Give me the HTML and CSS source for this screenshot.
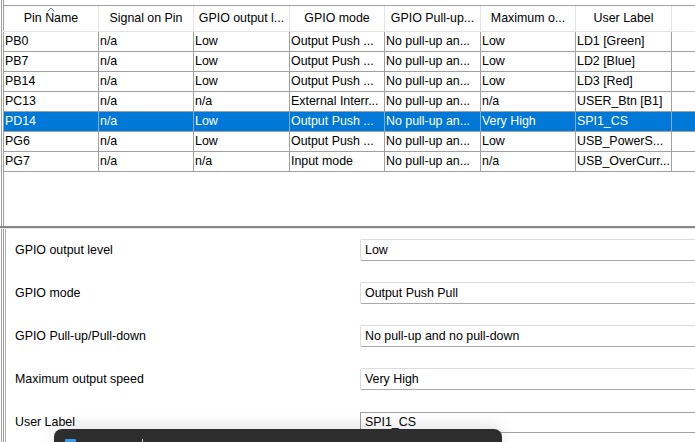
FILE: index.html
```html
<!DOCTYPE html>
<html>
<head>
<meta charset="utf-8">
<link rel="stylesheet" href="styles.css">
</head>
<body>
<div class="app">
  <div class="top">
    <div class="table">
      <div class="row head">
        <div class="c c1">Pin Name<svg class="caret" width="8" height="5" viewBox="0 0 8 5"><polyline points="0.5,4.5 4,1 7.5,4.5" fill="none" stroke="#707070" stroke-width="1"/></svg></div>
        <div class="c c2">Signal on Pin</div>
        <div class="c c3">GPIO output l...</div>
        <div class="c c4">GPIO mode</div>
        <div class="c c5">GPIO Pull-up...</div>
        <div class="c c6">Maximum o...</div>
        <div class="c c7">User Label</div>
        <div class="c c8"></div>
      </div>
      <div class="row">
        <div class="c c1">PB0</div><div class="c c2">n/a</div><div class="c c3">Low</div><div class="c c4">Output Push ...</div><div class="c c5">No pull-up an...</div><div class="c c6">Low</div><div class="c c7">LD1 [Green]</div><div class="c c8"></div>
      </div>
      <div class="row">
        <div class="c c1">PB7</div><div class="c c2">n/a</div><div class="c c3">Low</div><div class="c c4">Output Push ...</div><div class="c c5">No pull-up an...</div><div class="c c6">Low</div><div class="c c7">LD2 [Blue]</div><div class="c c8"></div>
      </div>
      <div class="row">
        <div class="c c1">PB14</div><div class="c c2">n/a</div><div class="c c3">Low</div><div class="c c4">Output Push ...</div><div class="c c5">No pull-up an...</div><div class="c c6">Low</div><div class="c c7">LD3 [Red]</div><div class="c c8"></div>
      </div>
      <div class="row">
        <div class="c c1">PC13</div><div class="c c2">n/a</div><div class="c c3">n/a</div><div class="c c4">External Interr...</div><div class="c c5">No pull-up an...</div><div class="c c6">n/a</div><div class="c c7">USER_Btn [B1]</div><div class="c c8"></div>
      </div>
      <div class="row sel">
        <div class="c c1">PD14</div><div class="c c2">n/a</div><div class="c c3">Low</div><div class="c c4">Output Push ...</div><div class="c c5">No pull-up an...</div><div class="c c6">Very High</div><div class="c c7">SPI1_CS</div><div class="c c8"></div>
      </div>
      <div class="row">
        <div class="c c1">PG6</div><div class="c c2">n/a</div><div class="c c3">Low</div><div class="c c4">Output Push ...</div><div class="c c5">No pull-up an...</div><div class="c c6">Low</div><div class="c c7">USB_PowerS...</div><div class="c c8"></div>
      </div>
      <div class="row">
        <div class="c c1">PG7</div><div class="c c2">n/a</div><div class="c c3">n/a</div><div class="c c4">Input mode</div><div class="c c5">No pull-up an...</div><div class="c c6">n/a</div><div class="c c7">USB_OverCurr...</div><div class="c c8"></div>
      </div>
    </div>
  </div>
  <div class="divider"></div>
  <div class="bottom">
    <div class="prop"><span class="label">GPIO output level</span><span class="box">Low</span></div>
    <div class="prop"><span class="label">GPIO mode</span><span class="box">Output Push Pull</span></div>
    <div class="prop"><span class="label">GPIO Pull-up/Pull-down</span><span class="box">No pull-up and no pull-down</span></div>
    <div class="prop"><span class="label">Maximum output speed</span><span class="box">Very High</span></div>
    <div class="prop"><span class="label">User Label</span><span class="box edit">SPI1_CS</span></div>
  </div>
  <div class="popup">
    <span class="pop-icon"></span>
    <span class="pop-tick"></span>
  </div>
</div>
</body>
</html>
```

FILE: styles.css
```css
html, body {
  margin: 0;
  padding: 0;
  background: #ffffff;
}
body {
  width: 695px;
  height: 442px;
  overflow: hidden;
  font-family: "Liberation Sans", Arial, sans-serif;
  font-size: 12.4px;
  color: #000;
}
.app {
  position: relative;
  width: 695px;
  height: 442px;
  display: flex;
  flex-direction: column;
}
.top {
  height: 226px;
  padding-top: 5px;
  box-sizing: border-box;
  background: linear-gradient(to right, #fff 0 1px, #a0a0a0 1px 2px, #fff 2px 3px, #a0a0a0 3px 4px, #fff 4px);
  padding-left: 3px;
  overflow: hidden;
}
.table {
  border-top: 1px solid #a0a0a0;
  width: 720px;
  background: #fff;
}
.row {
  display: flex;
  height: 19px;
  border-bottom: 1px solid #a0a0a0;
}
.row .c {
  box-sizing: border-box;
  border-left: 1px solid #a0a0a0;
  padding-left: 1px;
  line-height: 19px;
  white-space: nowrap;
  overflow: hidden;
}
.c1 { width: 95px; }
.c2 { width: 95px; }
.c3 { width: 96px; }
.c4 { width: 95px; }
.c5 { width: 96px; }
.c6 { width: 95px; }
.c7 { width: 96px; }
.c8 { width: 49px; }
.row.head {
  height: 25px;
  border-bottom: 1px solid #e3e3e3;
}
.row.head .c {
  position: relative;
  border-left: 1px solid #e5e5e5;
  line-height: 25px;
  text-align: center;
  padding-left: 0;
}
.row.head .c1 { border-left: 1px solid #a0a0a0; }
.caret {
  position: absolute;
  left: 43px;
  top: 1px;
}
.row.sel {
  background: #0078d7;
  color: #fff;
}
.row.sel .c {
  border-left-color: #8fa9c4;
}
.divider {
  height: 2px;
  background: #858585;
}
.bottom {
  flex: 1;
  padding-top: 10px;
  display: flex;
  flex-direction: column;
  gap: 21px;
  background: linear-gradient(to right, #fff 0 1px, #a0a0a0 1px 2px, #fff 2px 3px, #a0a0a0 3px 4px, #fff 4px 5px, #b0b0b0 5px 6px, #fff 6px);
  border-top: 1px solid #e6e6e6;
}
.prop {
  display: flex;
  align-items: center;
  height: 22px;
}
.label {
  width: 345px;
  padding-left: 15px;
  flex: none;
}
.box {
  flex: none;
  width: 360px;
  height: 22px;
  box-sizing: border-box;
  border: 1px solid #dcdcdc;
  border-bottom-color: #a8a8a8;
  border-radius: 2px;
  padding-left: 4px;
  line-height: 20px;
  background: #fff;
}
.box.edit {
  border: 1px solid #a0a0a0;
  border-radius: 0;
  height: 21px;
  line-height: 19px;
}
.popup {
  position: absolute;
  left: 54px;
  top: 429px;
  width: 448px;
  height: 30px;
  background: #2d2d2d;
  border-radius: 8px 8px 0 0;
  box-shadow: 0 -4px 14px rgba(0, 0, 0, 0.10);
}
.pop-icon {
  position: absolute;
  left: 11px;
  top: 10px;
  width: 11px;
  height: 11px;
  background: #3c9be8;
  border-radius: 1px;
}
.pop-tick {
  position: absolute;
  left: 88px;
  top: 10px;
  width: 1px;
  height: 4px;
  background: #d0d0d0;
}
```
